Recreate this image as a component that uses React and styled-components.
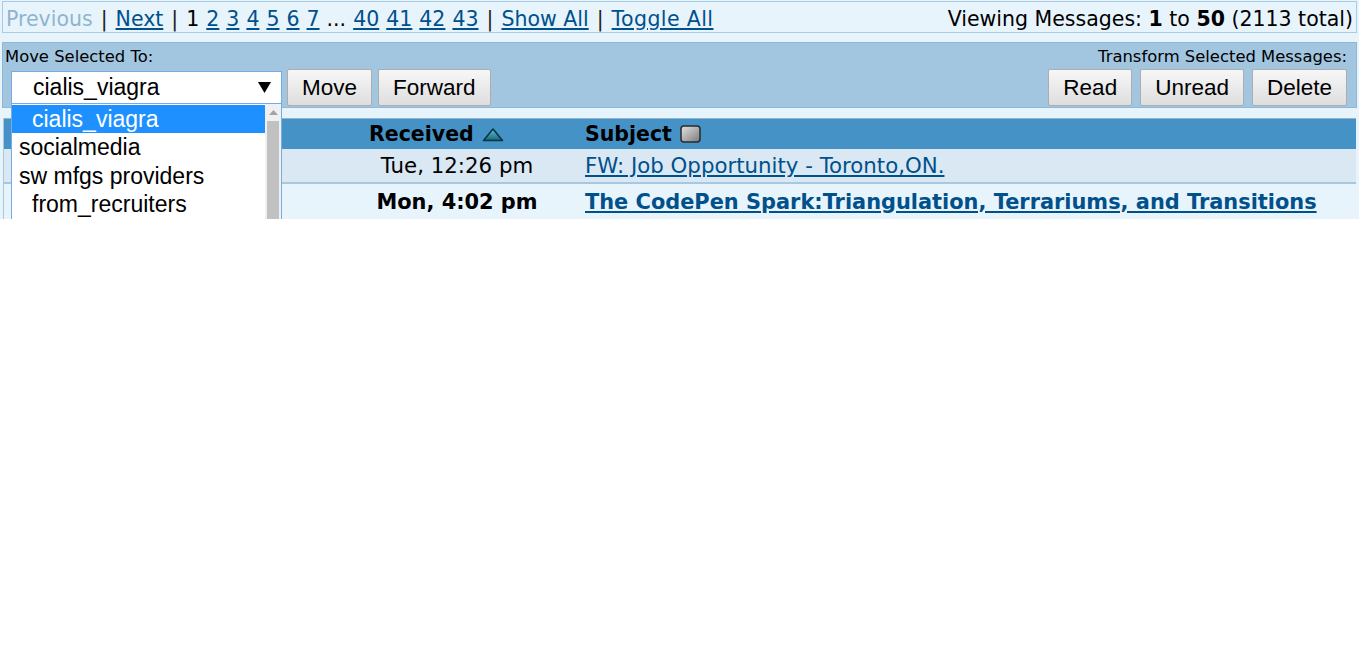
import React from "react";
import styled, { createGlobalStyle } from "styled-components";

const GlobalStyle = createGlobalStyle`
  html, body {
    margin: 0;
    padding: 0;
    background: #ffffff;
  }
  body {
    font-family: "DejaVu Sans", Verdana, sans-serif;
    color: #000;
  }
`;

const Frame = styled.div`
  height: 219px;
  overflow: hidden;
  background: #e8f4fc;
  padding: 1px 2px 0;
  box-sizing: border-box;
`;

const Paginator = styled.div`
  height: 32px;
  box-sizing: border-box;
  border: 1px solid #a9cbe3;
  background: #e8f4fc;
  display: flex;
  align-items: center;
  justify-content: space-between;
  padding: 3px 3px 0;
  font-size: 20.5px;
  white-space: nowrap;
`;

const Pages = styled.div`
  display: flex;
  align-items: center;
  gap: 8px;
`;

const Numbers = styled.div`
  display: flex;
  align-items: center;
  gap: 7px;
`;

const PageLink = styled.a`
  color: #00508c;
  text-decoration: underline;
  cursor: pointer;
  letter-spacing: ${(p) => (p.$wide ? "0.4px" : "0")};
`;

const Disabled = styled.span`
  color: #8fb4d0;
`;

const Sep = styled.span`
  color: #222;
`;

const Viewing = styled.div`
  b {
    font-weight: bold;
  }
`;

const Toolbar = styled.div`
  margin-top: 9px;
  height: 66px;
  box-sizing: border-box;
  background: #a3c6e0;
  border: 1px solid #8fb8d6;
  display: flex;
  justify-content: space-between;
  padding: 4px 0 1px;
`;

const ToolGroup = styled.div`
  display: flex;
  flex-direction: column;
  align-items: ${(p) => (p.$right ? "flex-end" : "flex-start")};
  padding: ${(p) => (p.$right ? "0 9px 0 0" : "0 0 0 2px")};
`;

const ToolLabel = styled.div`
  font-size: 16.4px;
  line-height: 19px;
  height: 19px;
  white-space: nowrap;
`;

const ButtonRow = styled.div`
  margin-top: 3px;
  display: flex;
  align-items: center;
  gap: ${(p) => p.$gap || 7}px;
  padding-left: ${(p) => p.$indent || 0}px;
`;

const Button = styled.button`
  height: 37px;
  padding: 0 14px;
  font-family: "Liberation Sans", Arial, sans-serif;
  font-size: 22.5px;
  color: #000;
  background: linear-gradient(#f7f7f7, #dedede);
  border: 1px solid #adadad;
  border-radius: 2px;
  cursor: pointer;
`;

const SelectWrap = styled.div`
  position: relative;
  width: 271px;
  margin-right: -1px;
`;

const SelectBox = styled.div`
  height: 33px;
  box-sizing: border-box;
  border: 1px solid #76abe6;
  background: #fff;
  display: flex;
  align-items: center;
  justify-content: space-between;
  padding: 0 10px 0 21px;
  font-family: "Liberation Sans", Arial, sans-serif;
  font-size: 23px;
`;

const DropList = styled.div`
  position: absolute;
  top: 33px;
  left: 0;
  width: 271px;
  height: 120px;
  box-sizing: border-box;
  background: #fff;
  border: 1px solid #76abe6;
  border-top: 0;
  padding-top: 1px;
  display: flex;
  z-index: 5;
`;

const Options = styled.div`
  flex: 1;
  min-width: 0;
`;

const Option = styled.div`
  height: 28.3px;
  line-height: 28px;
  padding-left: ${(p) => (p.$indent ? 20 : 7)}px;
  font-family: "Liberation Sans", Arial, sans-serif;
  font-size: 23px;
  white-space: nowrap;
  background: ${(p) => (p.$active ? "#1e90ff" : "transparent")};
  color: ${(p) => (p.$active ? "#fff" : "#000")};
`;

const ScrollTrack = styled.div`
  width: 16px;
  margin-top: -1px;
  background: #f0f0f0;
  display: flex;
  flex-direction: column;
  align-items: center;
`;

const ScrollArrow = styled.div`
  height: 17px;
  display: flex;
  align-items: center;
  justify-content: center;
`;

const ScrollThumb = styled.div`
  width: 12px;
  flex: 1;
  background: #c1c1c1;
`;

const Table = styled.div`
  margin: 10px 1px 0;
  border-left: 1px solid #a6c8e0;
`;

const Row = styled.div`
  display: grid;
  grid-template-columns: 333px 240px 1fr;
  align-items: center;
  height: ${(p) => p.$h || 35}px;
  box-sizing: border-box;
  background: ${(p) => p.$bg};
  border-top: ${(p) => (p.$head ? "1px solid #8fb5d0" : "0")};
  border-bottom: ${(p) => (p.$line ? "2px solid #a6c8e0" : "0")};
  font-size: ${(p) => (p.$bold ? 20.9 : 21.3)}px;
  font-weight: ${(p) => (p.$bold ? "bold" : "normal")};
  white-space: nowrap;
`;

const HeadCell = styled.div`
  display: flex;
  align-items: center;
  gap: 8px;
  padding-left: ${(p) => p.$pad}px;
  font-size: 20.5px;
  font-weight: bold;
`;

const DateCell = styled.div`
  text-align: center;
`;

const SubjectCell = styled.div`
  padding-left: 8px;
  a {
    color: #00508c;
    text-decoration: underline;
  }
`;

const SortUp = () => (
  <svg width="22" height="15" viewBox="0 0 22 15">
    <defs>
      <linearGradient id="sortg" x1="0" y1="0" x2="0" y2="1">
        <stop offset="0" stopColor="#62c3d6" />
        <stop offset="1" stopColor="#13667d" />
      </linearGradient>
    </defs>
    <path
      d="M1.5 13.5 L11 2 L20.5 13.5 Z"
      fill="url(#sortg)"
      stroke="#0a3440"
      strokeWidth="1.6"
      strokeLinejoin="round"
    />
  </svg>
);

const SortNone = () => (
  <svg width="21" height="18" viewBox="0 0 21 18">
    <defs>
      <linearGradient id="sqg" x1="0" y1="0" x2="1" y2="1">
        <stop offset="0" stopColor="#e4e4e4" />
        <stop offset="1" stopColor="#7a7a7a" />
      </linearGradient>
    </defs>
    <rect x="1" y="1" width="19" height="16" rx="3" fill="url(#sqg)" stroke="#2a2a2a" strokeWidth="1.5" />
  </svg>
);

const Caret = () => (
  <svg width="13" height="11" viewBox="0 0 13 11">
    <path d="M0 0 H13 L6.5 11 Z" fill="#000" />
  </svg>
);

const UpArrow = () => (
  <svg width="9" height="5" viewBox="0 0 9 5">
    <path d="M0 5 L4.5 0 L9 5 Z" fill="#a3a3a3" />
  </svg>
);

const pages = ["2", "3", "4", "5", "6", "7"];
const tail = ["40", "41", "42", "43"];

const folders = [
  { name: "cialis_viagra", indent: true, active: true },
  { name: "socialmedia" },
  { name: "sw mfgs providers" },
  { name: "from_recruiters", indent: true },
];

export default function App() {
  return (
    <>
      <GlobalStyle />
      <Frame>
        <Paginator>
          <Pages>
            <Disabled>Previous</Disabled>
            <Sep>|</Sep>
            <PageLink>Next</PageLink>
            <Sep>|</Sep>
            <Numbers>
              <span>1</span>
              {pages.map((p) => (
                <PageLink key={p}>{p}</PageLink>
              ))}
              <span>...</span>
              {tail.map((p) => (
                <PageLink key={p}>{p}</PageLink>
              ))}
            </Numbers>
            <Sep>|</Sep>
            <PageLink>Show All</PageLink>
            <Sep>|</Sep>
            <PageLink $wide>Toggle All</PageLink>
          </Pages>
          <Viewing>
            Viewing Messages: <b>1</b> to <b>50</b> (2113 total)
          </Viewing>
        </Paginator>

        <Toolbar>
          <ToolGroup>
            <ToolLabel>Move Selected To:</ToolLabel>
            <ButtonRow $indent={6} $gap={6}>
              <SelectWrap>
                <SelectBox>
                  <span>cialis_viagra</span>
                  <Caret />
                </SelectBox>
                <DropList>
                  <Options>
                    {folders.map((f) => (
                      <Option key={f.name} $indent={f.indent} $active={f.active}>
                        {f.name}
                      </Option>
                    ))}
                  </Options>
                  <ScrollTrack>
                    <ScrollArrow>
                      <UpArrow />
                    </ScrollArrow>
                    <ScrollThumb />
                  </ScrollTrack>
                </DropList>
              </SelectWrap>
              <Button>Move</Button>
              <Button>Forward</Button>
            </ButtonRow>
          </ToolGroup>
          <ToolGroup $right>
            <ToolLabel>Transform Selected Messages:</ToolLabel>
            <ButtonRow $gap={8}>
              <Button>Read</Button>
              <Button>Unread</Button>
              <Button>Delete</Button>
            </ButtonRow>
          </ToolGroup>
        </Toolbar>

        <Table>
          <Row $head $h={31} $bg="#4592c6">
            <div />
            <HeadCell $pad={32}>
              Received <SortUp />
            </HeadCell>
            <HeadCell $pad={8}>
              Subject <SortNone />
            </HeadCell>
          </Row>
          <Row $bg="#dae8f4" $line>
            <div />
            <DateCell>Tue, 12:26 pm</DateCell>
            <SubjectCell>
              <a>FW: Job Opportunity - Toronto,ON.</a>
            </SubjectCell>
          </Row>
          <Row $bg="#e8f4fc" $bold>
            <div />
            <DateCell>Mon, 4:02 pm</DateCell>
            <SubjectCell>
              <a>The CodePen Spark:Triangulation, Terrariums, and Transitions</a>
            </SubjectCell>
          </Row>
        </Table>
      </Frame>
    </>
  );
}
